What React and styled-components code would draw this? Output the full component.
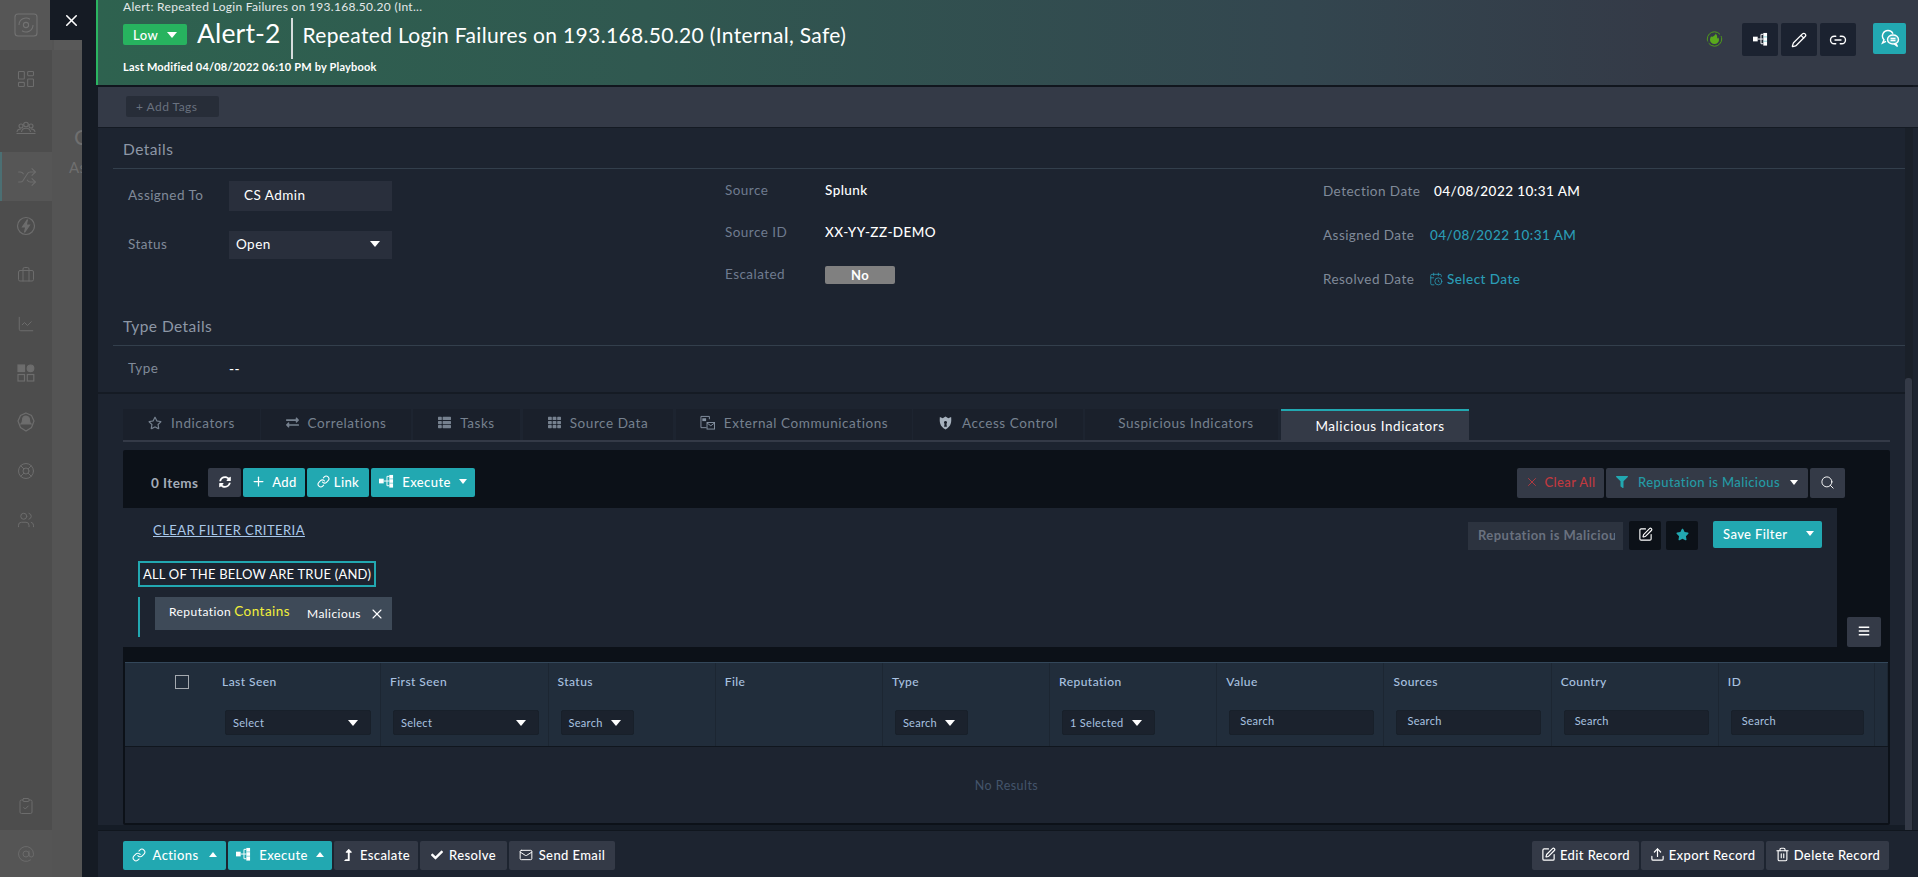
import React from 'react';
import styled, { createGlobalStyle } from 'styled-components';
import {
  LayoutDashboard, Users, Shuffle, Briefcase, ChartLine, LifeBuoy, ClipboardCheck, AtSign,
  X, Pencil, Link2, Link, Plus, Search, SquarePen, Mail, Upload, Trash2, CalendarClock,
} from 'lucide-react';
import {
  FaRegStar, FaExchangeAlt, FaThList, FaTh, FaSyncAlt, FaFilter, FaStar, FaBars, FaCheck, FaLevelUpAlt,
} from 'react-icons/fa';

const Global = createGlobalStyle`
  html, body { margin: 0; padding: 0; background: #1d2430; }
  * { box-sizing: border-box; }
  body { font-family: Lato, "Liberation Sans", sans-serif; letter-spacing: .45px; }
`;

const Page = styled.div`
  position: relative;
  display: flex;
  width: 1918px;
  height: 877px;
  overflow: hidden;
`;
const Sidebar = styled.nav`
  width: 52px;
  display: flex;
  flex-direction: column;
  background: #4d4d4d;
  color: #6d6d6d;
`;
const LogoCell = styled.div`
  height: 50px;
  margin-bottom: 4px;
  display: flex;
  align-items: center;
  justify-content: center;
  background: #565656;
`;
const NavItem = styled.div`
  height: 49px;
  flex: none;
  display: flex;
  align-items: center;
  justify-content: center;
  background: ${p => (p.$active ? '#565656' : 'transparent')};
  border-left: ${p => (p.$active ? '2px solid #4b6f73' : '0')};
`;
const NavBottom = styled(NavItem)`
  margin-top: auto;
`;
const AtCell = styled(NavItem)`
  height: 47px;
  background: #555555;
`;
const BackColumn = styled.div`
  width: 30px;
  background: #545454;
  color: #6f6f6f;
  overflow: hidden;
  white-space: nowrap;
`;
const BackTop = styled.div`
  height: 50px;
  background: #595959;
  margin-left: 2px;
`;
const BackHead = styled.div`
  margin: 75px 0 0 22px;
  font-size: 22px;
  line-height: 24px;
`;
const BackSub = styled.div`
  margin: 9px 0 0 17px;
  font-size: 15px;
  line-height: 18px;
`;
const Strip = styled.div`
  width: 14px;
  background: #151b24;
`;
const CloseButton = styled.button`
  position: absolute;
  left: 50px;
  top: 0;
  width: 46px;
  height: 40px;
  border: 0;
  padding: 0 4px 0 0;
  background: #151b24;
  color: #fff;
  display: flex;
  align-items: center;
  justify-content: center;
`;
const Drawer = styled.main`
  flex: 1;
  min-width: 0;
  display: flex;
  flex-direction: column;
  background: #151b24;
`;
const Header = styled.header`
  height: 85px;
  flex: none;
  display: flex;
  justify-content: space-between;
  border-left: 2px solid #2bb561;
  padding-left: 25px;
  background: linear-gradient(90deg, #2e624f 0%, #305850 30%, #33464f 66%, #343a47 86%);
  color: #fff;
`;
const Breadcrumb = styled.div`
  font-size: 12px;
  line-height: 14px;
  color: #e4e9ea;
  letter-spacing: .3px;
`;
const TitleRow = styled.div`
  display: flex;
  height: 41px;
  margin-top: 4px;
`;
const SeverityPill = styled.div`
  width: 64px;
  height: 21px;
  margin-top: 6px;
  padding-left: 10px;
  display: flex;
  align-items: center;
  gap: 9px;
  background: #27b35f;
  border-radius: 2px;
  font-size: 13px;
  font-weight: 500;
`;
const AlertId = styled.div`
  margin-left: 10px;
  font-size: 26.5px;
  line-height: 28px;
  padding-top: 1px;
  letter-spacing: .15px;
`;
const TitleDivider = styled.div`
  width: 2px;
  margin: 0 10px;
  background: #d6dcdc;
`;
const AlertTitle = styled.div`
  font-size: 21px;
  line-height: 30px;
  padding-top: 2px;
  letter-spacing: .33px;
`;
const Meta = styled.div`
  margin-top: 1px;
  font-size: 11px;
  line-height: 14px;
  font-weight: 700;
  letter-spacing: .2px;
`;
const HeaderActions = styled.div`
  display: flex;
  align-items: flex-start;
  padding: 23px 12px 0 0;
`;
const Flame = styled.div`
  width: 16px;
  height: 16px;
  margin: 7px 20px 0 0;
`;
const DarkIconButton = styled.button`
  width: 36px;
  height: 33px;
  margin-right: 3px;
  border: 0;
  padding: 0;
  border-radius: 2px;
  background: #1b2230;
  color: #fff;
  display: flex;
  align-items: center;
  justify-content: center;
`;
const TealIconButton = styled(DarkIconButton)`
  margin: 0 0 0 14px;
  background: #22a8b1;
  width: 33px;
  height: 31px;
`;
const HeaderRule = styled.div`
  height: 2px;
  flex: none;
  margin: 0 5px 0 2px;
  background: #11161e;
`;
const TagsBar = styled.div`
  height: 41px;
  flex: none;
  padding: 9px 0 0 28px;
  margin-left: 2px;
  background: #343a47;
  border-bottom: 1px solid #141a23;
`;
const AddTags = styled.div`
  width: 93px;
  height: 21px;
  padding-left: 10px;
  display: flex;
  align-items: center;
  background: #272d38;
  border-radius: 2px;
  color: #69717f;
  font-size: 12px;
`;
const Body = styled.div`
  flex: 1;
  min-height: 0;
  display: flex;
  margin-left: 2px;
  background: #1d2430;
`;
const Scroller = styled.div`
  width: 1807px;
  flex: none;
  display: flex;
  flex-direction: column;
`;
const SectionTitle = styled.h2`
  margin: 0 0 0 15px;
  height: ${p => (p.$compact ? '37px' : '41px')};
  padding: ${p => (p.$compact ? '7px' : '11px')} 0 0 10px;
  border-bottom: 1px solid #333f4c;
  font-size: 15.5px;
  font-weight: 400;
  line-height: 20px;
  color: #8d97a6;
`;
const DetailsGrid = styled.div`
  height: 140px;
  margin-left: 30px;
  display: grid;
  grid-template-columns: 597px 598px 1fr;
`;
const FieldColumn = styled.div`
  display: flex;
  flex-direction: column;
`;
const InputColumn = styled(FieldColumn)`
  padding-top: 12px;
  gap: 20px;
`;
const InputRow = styled.div`
  display: flex;
  align-items: center;
`;
const Label = styled.div`
  width: ${p => p.$w || 101}px;
  flex: none;
  font-size: 13.5px;
  padding-bottom: ${p => (p.$raised ? 2 : 0)}px;
  color: ${p => (p.$dim ? '#6f7b8f' : '#808a99')};
`;
const AssignBox = styled.div`
  width: 163px;
  height: 30px;
  padding: 0 0 2px 15px;
  display: flex;
  align-items: center;
  background: #292f3c;
  color: #fff;
  font-size: 13.5px;
`;
const StatusBox = styled(AssignBox)`
  height: 28px;
  padding: 0 12px 2px 7px;
  justify-content: space-between;
`;
const ValueRow = styled.div`
  height: ${p => p.$h}px;
  flex: none;
  display: flex;
  align-items: center;
`;
const Value = styled.div`
  font-size: 13.5px;
  font-weight: 500;
  color: ${p => (p.$link ? '#2a9cb5' : '#fff')};
  display: flex;
  align-items: center;
  gap: 4px;
  margin-left: ${p => p.$offset || 0}px;
`;
const NoChip = styled.div`
  width: 70px;
  height: 18px;
  margin-top: 2px;
  display: flex;
  align-items: center;
  justify-content: center;
  background: #808080;
  border-radius: 2px;
  color: #fff;
  font-size: 13px;
  font-weight: 700;
`;
const TypeRow = styled.div`
  height: 46px;
  margin-left: 30px;
  display: flex;
  align-items: center;
`;
const SectionBreak = styled.div`
  height: 2px;
  flex: none;
  background: #151b24;
`;
const Tabs = styled.div`
  margin: 15px 15px 0 25px;
  height: 33px;
  flex: none;
  display: flex;
  border-bottom: 2px solid #343a47;
`;
const Tab = styled.div`
  width: ${p => p.$w}px;
  margin-right: ${p => p.$gap || 0}px;
  padding: 0 0 ${p => (p.$active ? 0 : 4)}px ${p => p.$inset || 0}px;
  flex: none;
  display: flex;
  align-items: center;
  justify-content: center;
  gap: 9px;
  font-size: 13.5px;
  letter-spacing: .56px;
  color: ${p => (p.$active ? '#fff' : '#76818f')};
  background: ${p => (p.$active ? '#343a47' : '#1a202b')};
  border-top: ${p => (p.$active ? '2px solid #22a8b1' : '0')};
`;
const Panel = styled.section`
  margin: 8px 15px 0 25px;
  height: 375px;
  flex: none;
  background: #0c1118;
  border-radius: 2px;
  display: flex;
  flex-direction: column;
`;
const Toolbar = styled.div`
  height: 58px;
  flex: none;
  padding: 18px 45px 0 28px;
  display: flex;
  justify-content: space-between;
`;
const ToolGroup = styled.div`
  display: flex;
  gap: 2px;
`;
const ItemCount = styled.div`
  width: 55px;
  height: 29px;
  display: flex;
  align-items: center;
  font-size: 13.5px;
  font-weight: 700;
  color: #a4acb8;
`;
const Button = styled.button`
  width: ${p => p.$w}px;
  height: ${p => p.$h || 29}px;
  border: 0;
  padding: 0 0 2px;
  border-radius: 2px;
  flex: none;
  display: flex;
  align-items: center;
  justify-content: center;
  gap: ${p => p.$gap ?? 6}px;
  font-family: inherit;
  font-size: 13px;
  font-weight: 500;
  letter-spacing: .4px;
  color: ${p => p.$color || '#fff'};
  background: ${p => (p.$teal ? '#22a8b1' : '#343a47')};
`;
const FilterRow = styled.div`
  height: 139px;
  flex: none;
  display: flex;
`;
const FilterBox = styled.div`
  width: 1714px;
  flex: none;
  display: flex;
  justify-content: space-between;
  background: #1d2430;
`;
const FilterLeft = styled.div`
  padding: 14px 0 0 15px;
`;
const ClearLink = styled.a`
  display: block;
  margin-left: 15px;
  font-size: 13px;
  line-height: 16px;
  color: #a9c8ea;
  text-decoration: underline;
`;
const CriteriaTitle = styled.div`
  width: 238px;
  height: 26px;
  margin-top: 23px;
  display: flex;
  align-items: center;
  justify-content: center;
  border: 2px solid #22a8b1;
  color: #fff;
  font-size: 13px;
  letter-spacing: .22px;
  white-space: nowrap;
`;
const CriteriaGroup = styled.div`
  height: 40px;
  margin-top: 10px;
  padding-left: 15px;
  border-left: 2px solid #22a8b1;
`;
const Chip = styled.div`
  width: 237px;
  height: 33px;
  padding: 0 7px 4px 14px;
  display: flex;
  align-items: center;
  background: #3e4a58;
  color: #fff;
  font-size: 12px;
`;
const ChipOperator = styled.span`
  margin: 0 auto 0 3px;
  color: #f2ef3a;
  font-size: 13.5px;
  position: relative;
  top: -1px;
`;
const ChipValue = styled.span`
  margin-right: 8px;
  position: relative;
  top: 2px;
`;
const ChipClose = styled.span`
  display: flex;
  position: relative;
  top: 2px;
`;
const FilterRight = styled.div`
  display: flex;
  align-items: flex-start;
  padding: 13px 15px 0 0;
`;
const FilterName = styled.div`
  width: 155px;
  height: 28px;
  margin: 1px 6px 0 0;
  padding: 0 8px 2px 10px;
  display: flex;
  align-items: center;
  background: #2c333f;
  color: #69717f;
  font-size: 13px;
  font-weight: 700;
`;
const FilterNameText = styled.span`
  overflow: hidden;
  white-space: nowrap;
`;
const BlackIconButton = styled.button`
  width: 32px;
  height: 29px;
  margin-right: ${p => p.$gap}px;
  border: 0;
  padding: 0 0 2px;
  border-radius: 2px;
  background: #0c1118;
  color: ${p => p.$color || '#fff'};
  display: flex;
  align-items: center;
  justify-content: center;
`;
const SaveFilter = styled(Button)`
  justify-content: space-between;
  padding: 0 8px 2px 10px;
  height: 27px;
`;
const BurgerCell = styled.div`
  flex: 1;
  display: flex;
  align-items: flex-end;
  padding-left: 10px;
`;
const Table = styled.div`
  margin: 15px 2px 0;
  flex: 1;
  min-height: 0;
  display: flex;
  flex-direction: column;
`;
const TableHead = styled.div`
  height: 85px;
  flex: none;
  display: grid;
  grid-template-columns: 88px 168px 167.5px repeat(7, 167.2px) 156px 1fr;
  background: #212d3b;
  border-top: 1px solid #33475a;
  border-bottom: 1px solid #10161e;
`;
const CheckCell = styled.div`
  padding: 12px 0 0 50px;
`;
const Checkbox = styled.div`
  width: 14px;
  height: 14px;
  border: 1px solid #a4a9af;
`;
const HeadCell = styled.div`
  padding: 11px 0 0 9px;
  border-right: 1px solid #1c2632;
`;
const HeadLabel = styled.div`
  font-size: 12px;
  font-weight: 500;
  line-height: 16px;
  color: #a9c2e0;
`;
const Control = styled.div`
  width: ${p => p.$w}px;
  height: 25px;
  margin: 20px 0 0 3px;
  padding: 0 ${p => (p.$input ? 0 : 12)}px ${p => (p.$input ? 5 : 0)}px ${p => (p.$input ? 10 : 7)}px;
  display: flex;
  align-items: center;
  justify-content: space-between;
  background: #1b222d;
  border: 1px solid #18202a;
  border-radius: 2px;
  font-size: 11px;
  letter-spacing: .3px;
  color: #a9c2e0;
  white-space: nowrap;
`;
const Empty = styled.div`
  flex: 1;
  display: flex;
  align-items: center;
  justify-content: center;
  background: #1d2430;
  font-size: 12.5px;
  color: #44546b;
`;
const PanelFoot = styled.div`
  height: 2px;
  flex: none;
`;
const BottomStrip = styled.div`
  height: 5px;
  flex: none;
  background: #151c26;
`;
const Track = styled.div`
  width: 8px;
  flex: none;
  background: #1a2029;
  padding-top: 250px;
`;
const Thumb = styled.div`
  height: 452px;
  width: 7px;
  border-radius: 3px 3px 0 0;
  background: #343a47;
`;
const Footer = styled.footer`
  height: 47px;
  flex: none;
  margin-left: 2px;
  padding: 10px 29px 0 25px;
  display: flex;
  justify-content: space-between;
  background: #1d2430;
  border-top: 1px solid #10161e;
`;
const Caret = styled.span`
  width: 0;
  height: 0;
  flex: none;
  margin-left: ${p => p.$ml || 0}px;
  border-left: ${p => (p.$big ? 5 : 4)}px solid transparent;
  border-right: ${p => (p.$big ? 5 : 4)}px solid transparent;
  ${p => (p.$up ? 'border-bottom: 5px solid #fff;' : `border-top: ${p.$big ? 6 : 5}px solid #fff;`)}
`;

const Execute = ({ size = 15 }) => (
  <svg width={size} height={size} viewBox="0 0 16 16" fill="none">
    <rect x="0" y="5" width="5" height="5" fill="currentColor" />
    <path d="M5 7.5h3.5M8.5 2.5v10M8.5 2.5H11M8.5 7.5H11M8.5 12.5H11" stroke="currentColor" />
    <path d="M11 1h4v13.500h-4z" fill="currentColor" />
    <path d="M11 5.200h4M11 9.800h4" stroke="#22a8b1" strokeOpacity=".55" />
  </svg>
);
const Chat = () => (
  <svg width="20" height="20" viewBox="0 0 20 20" fill="none" stroke="#fff" strokeWidth="1.4">
    <path d="M8 1.500a5.500 5.500 0 0 0-4 9.300L2.500 14l3.500-1.600" />
    <path d="M8 1.500a5.500 5.500 0 0 1 5 3.300" />
    <ellipse cx="13" cy="10.500" rx="5.500" ry="4.500" fill="#fff" fillOpacity=".18" />
    <path d="M10.500 9.500h5M10.500 11.500h5M16 14.500l1.500 3-3.500-2.700" />
  </svg>
);
const FlameIcon = () => (
  <svg width="17" height="18" viewBox="0 0 16 18" fill="none">
    <circle cx="8" cy="9" r="7.200" stroke="#4f9a1a" strokeWidth="1" strokeDasharray="18 2 20 2" />
    <path d="M9 3.500c.4 1.900-3 3.200-3.400 3.500-.7-.2-1-.7-1-.7C3.800 7.800 3.500 9 3.500 10c0 2.200 2 4 4.500 4s4.500-1.800 4.500-4c0-1.100-.3-2-.9-2.600-.1.600-.5 1-.9 1.100C10.900 6.500 10.500 4.500 9 3.500z" fill="#5aaa1c" />
  </svg>
);
const Logo = () => (
  <svg width="24" height="24" viewBox="0 0 24 24" fill="none" stroke="#727272" strokeWidth="1.100">
    <rect x="1" y="1" width="22" height="22" rx="3" />
    <path d="M5 12a7 7 0 0 1 11-5.700M19 12a7 7 0 0 1-11 5.700" />
    <circle cx="12" cy="12" r="2.600" />
  </svg>
);
const GroupIcon = () => (
  <svg width="20" height="14" viewBox="0 0 20 14" fill="none" stroke="currentColor" strokeWidth="1.100">
    <circle cx="5" cy="5" r="2" />
    <circle cx="10" cy="3.500" r="2.300" />
    <circle cx="15" cy="5" r="2" />
    <path d="M1 11c.2-2 1.800-3 4-3M19 11c-.2-2-1.800-3-4-3M5.500 11c.3-2.500 2-3.800 4.500-3.800s4.200 1.300 4.500 3.800M.5 12.500h19" />
  </svg>
);
const BoltCircle = () => (
  <svg width="20" height="20" viewBox="0 0 20 20" fill="none" stroke="currentColor" strokeWidth="1.200">
    <circle cx="10" cy="10" r="8.500" />
    <path d="M11.500 3.500 6.500 11h3.300l-1.300 5.500 5-7.500h-3.300z" fill="currentColor" />
  </svg>
);
const AppsIcon = () => (
  <svg width="18" height="18" viewBox="0 0 18 18" fill="none" stroke="currentColor" strokeWidth="1.200">
    <rect x="1" y="1" width="6.500" height="6.500" fill="currentColor" />
    <circle cx="13.500" cy="4.300" r="3.300" fill="currentColor" />
    <rect x="1" y="10.500" width="6.500" height="6.500" />
    <rect x="10.300" y="10.500" width="6.500" height="6.500" />
  </svg>
);
const BellCircle = () => (
  <svg width="18" height="20" viewBox="0 0 18 20" fill="none" stroke="currentColor" strokeWidth="1.200">
    <path d="M9 1 L14.500 3.500 L17 9 L14.500 15.500 L9 19 L3.500 15.500 L1 9 L3.500 3.500 Z" />
    <path d="M9 4c-2.500 0-3.500 2-3.500 4.500 0 2-1 3-1.500 3.500h10c-.5-.5-1.500-1.500-1.500-3.500C12.500 6 11.500 4 9 4z" fill="currentColor" />
  </svg>
);
const ExternalComm = () => (
  <svg width="15" height="15" viewBox="0 0 16 16" fill="none" stroke="#8793a3" strokeWidth="1">
    <path d="M1 1.500h9v3M1 1.500v12h6" />
    <rect x="2.500" y="3.500" width="4" height="3" fill="#8793a3" stroke="none" />
    <rect x="7.500" y="8" width="8" height="7" fill="#1a202b" />
    <path d="M7.500 8.500l4 3 4-3" />
  </svg>
);
const Shield = () => (
  <svg width="15" height="15" viewBox="0 0 16 16">
    <path d="M2 2.200 5 3.500 8 1.500l3 2 3-1.300c.5 5 .3 10-6 13.300C1.700 12.200 1.500 7.200 2 2.200z" fill="#a6b1bd" />
    <path d="M8 6.500a1.600 1.600 0 0 1 1 2.900l.5 3.100h-3l.5-3.100a1.600 1.600 0 0 1 1-2.900z" fill="#1a202b" />
  </svg>
);

const nav = [
  [LayoutDashboard, 20], [GroupIcon], [Shuffle, 20], [BoltCircle], [Briefcase, 18], [ChartLine, 18],
  [AppsIcon], [BellCircle], [LifeBuoy, 18], [Users, 18],
];

const tabs = [
  { label: 'Indicators', w: 137, gap: 1, icon: <FaRegStar size={14} /> },
  { label: 'Correlations', w: 150, gap: 2, icon: <FaExchangeAlt size={13} /> },
  { label: 'Tasks', w: 107, gap: 3, icon: <FaThList size={13} /> },
  { label: 'Source Data', w: 150, gap: 3, icon: <FaTh size={13} /> },
  { label: 'External Communications', w: 236, gap: 1, icon: <ExternalComm /> },
  { label: 'Access Control', w: 170, gap: 2, icon: <Shield /> },
  { label: 'Suspicious Indicators', w: 193, gap: 3, inset: 9 },
  { label: 'Malicious Indicators', w: 188, active: true, inset: 10 },
];

const columns = [
  { label: 'Last Seen', text: 'Select', w: 146 },
  { label: 'First Seen', text: 'Select', w: 146 },
  { label: 'Status', text: 'Search', w: 73 },
  { label: 'File' },
  { label: 'Type', text: 'Search', w: 73 },
  { label: 'Reputation', text: '1 Selected', w: 93 },
  { label: 'Value', text: 'Search', w: 145, input: true },
  { label: 'Sources', text: 'Search', w: 145, input: true },
  { label: 'Country', text: 'Search', w: 145, input: true },
  { label: 'ID', text: 'Search', w: 133, input: true },
];

export default function App() {
  return (
    <Page>
      <Global />
      <Sidebar>
        <LogoCell><Logo /></LogoCell>
        {nav.map(([Icon, size], i) => (
          <NavItem key={i} $active={i === 2}>
            {size ? <Icon size={size} strokeWidth={1.3} /> : <Icon />}
          </NavItem>
        ))}
        <NavBottom><ClipboardCheck size={18} strokeWidth={1.3} /></NavBottom>
        <AtCell><AtSign size={18} strokeWidth={1.2} /></AtCell>
      </Sidebar>
      <BackColumn>
        <BackTop />
        <BackHead>C</BackHead>
        <BackSub>As</BackSub>
      </BackColumn>
      <Strip />
      <CloseButton aria-label="Close"><X size={19} strokeWidth={2} /></CloseButton>
      <Drawer>
        <Header>
          <div>
            <Breadcrumb>Alert: Repeated Login Failures on 193.168.50.20 (Int...</Breadcrumb>
            <TitleRow>
              <SeverityPill>Low <Caret $big /></SeverityPill>
              <AlertId>Alert-2</AlertId>
              <TitleDivider />
              <AlertTitle>Repeated Login Failures on 193.168.50.20 (Internal, Safe)</AlertTitle>
            </TitleRow>
            <Meta>Last Modified 04/08/2022 06:10 PM by Playbook</Meta>
          </div>
          <HeaderActions>
            <Flame><FlameIcon /></Flame>
            <DarkIconButton><Execute /></DarkIconButton>
            <DarkIconButton><Pencil size={16} strokeWidth={1.9} /></DarkIconButton>
            <DarkIconButton><Link2 size={18} strokeWidth={1.8} /></DarkIconButton>
            <TealIconButton><Chat /></TealIconButton>
          </HeaderActions>
        </Header>
        <HeaderRule />
        <TagsBar><AddTags>+ Add Tags</AddTags></TagsBar>
        <Body>
          <Scroller>
            <SectionTitle>Details</SectionTitle>
            <DetailsGrid>
              <InputColumn>
                <InputRow>
                  <Label $raised>Assigned To</Label>
                  <AssignBox>CS Admin</AssignBox>
                </InputRow>
                <InputRow>
                  <Label $raised>Status</Label>
                  <StatusBox>Open <Caret $big /></StatusBox>
                </InputRow>
              </InputColumn>
              <FieldColumn>
                <ValueRow $h={42}><Label $dim $w={100}>Source</Label><Value>Splunk</Value></ValueRow>
                <ValueRow $h={42}><Label $dim $w={100}>Source ID</Label><Value>XX-YY-ZZ-DEMO</Value></ValueRow>
                <ValueRow $h={42}><Label $dim $w={100}>Escalated</Label><NoChip>No</NoChip></ValueRow>
              </FieldColumn>
              <FieldColumn>
                <ValueRow $h={44}><Label $w={106}>Detection Date</Label><Value $offset={5}>04/08/2022 10:31 AM</Value></ValueRow>
                <ValueRow $h={44}><Label $w={107}>Assigned Date</Label><Value $link>04/08/2022 10:31 AM</Value></ValueRow>
                <ValueRow $h={44}><Label $w={106}>Resolved Date</Label><Value $link><CalendarClock size={14} strokeWidth={1.4} /> Select Date</Value></ValueRow>
              </FieldColumn>
            </DetailsGrid>
            <SectionTitle $compact>Type Details</SectionTitle>
            <TypeRow>
              <Label $raised>Type</Label>
              <Value>--</Value>
            </TypeRow>
            <SectionBreak />
            <Tabs>
              {tabs.map(t => (
                <Tab key={t.label} $w={t.w} $gap={t.gap} $active={t.active} $inset={t.inset}>
                  {t.icon}{t.label}
                </Tab>
              ))}
            </Tabs>
            <Panel>
              <Toolbar>
                <ToolGroup>
                  <ItemCount>0 Items</ItemCount>
                  <Button $w={33}><FaSyncAlt size={12} /></Button>
                  <Button $w={62} $teal><Plus size={15} />Add</Button>
                  <Button $w={62} $teal $gap={4}><Link size={13} />Link</Button>
                  <Button $w={104} $teal $gap={8}><Execute />Execute<Caret /></Button>
                </ToolGroup>
                <ToolGroup>
                  <Button $w={87} $h={30} $color="#c0393f" $gap={5}><X size={14} strokeWidth={1.5} />Clear All</Button>
                  <Button $w={202} $h={30} $color="#249aa5" $gap={10}><FaFilter size={12} color="#22a8b1" />Reputation is Malicious<Caret /></Button>
                  <Button $w={35} $h={30}><Search size={15} strokeWidth={1.5} /></Button>
                </ToolGroup>
              </Toolbar>
              <FilterRow>
                <FilterBox>
                  <FilterLeft>
                    <ClearLink>CLEAR FILTER CRITERIA</ClearLink>
                    <CriteriaTitle>ALL OF THE BELOW ARE TRUE (AND)</CriteriaTitle>
                    <CriteriaGroup>
                      <Chip>
                        Reputation<ChipOperator>Contains</ChipOperator>
                        <ChipValue>Malicious</ChipValue>
                        <ChipClose><X size={16} strokeWidth={1.6} /></ChipClose>
                      </Chip>
                    </CriteriaGroup>
                  </FilterLeft>
                  <FilterRight>
                    <FilterName><FilterNameText>Reputation is Malicious</FilterNameText></FilterName>
                    <BlackIconButton $gap={5}><SquarePen size={15} strokeWidth={1.8} /></BlackIconButton>
                    <BlackIconButton $gap={15} $color="#22a8b1"><FaStar size={13} /></BlackIconButton>
                    <SaveFilter $w={109} $teal>Save Filter<Caret /></SaveFilter>
                  </FilterRight>
                </FilterBox>
                <BurgerCell><Button $w={34} $h={30}><FaBars size={12} /></Button></BurgerCell>
              </FilterRow>
              <Table>
                <TableHead>
                  <CheckCell><Checkbox /></CheckCell>
                  {columns.map(c => (
                    <HeadCell key={c.label}>
                      <HeadLabel>{c.label}</HeadLabel>
                      {c.text && (
                        <Control $w={c.w} $input={c.input}>
                          {c.text}{!c.input && <Caret $big />}
                        </Control>
                      )}
                    </HeadCell>
                  ))}
                  <HeadCell />
                </TableHead>
                <Empty>No Results</Empty>
              </Table>
              <PanelFoot />
            </Panel>
            <BottomStrip />
          </Scroller>
          <Track><Thumb /></Track>
        </Body>
        <Footer>
          <ToolGroup>
            <Button $w={103} $teal $gap={7}><Link size={14} strokeWidth={1.8} />Actions<Caret $up $ml={4} /></Button>
            <Button $w={104} $teal $gap={8}><Execute />Execute<Caret $up /></Button>
            <Button $w={84}><FaLevelUpAlt size={12} />Escalate</Button>
            <Button $w={87}><FaCheck size={12} />Resolve</Button>
            <Button $w={106}><Mail size={14} strokeWidth={1.7} />Send Email</Button>
          </ToolGroup>
          <ToolGroup>
            <Button $w={107} $gap={4}><SquarePen size={15} strokeWidth={1.9} />Edit Record</Button>
            <Button $w={123} $gap={4}><Upload size={15} strokeWidth={1.9} />Export Record</Button>
            <Button $w={123} $gap={4}><Trash2 size={15} strokeWidth={1.8} />Delete Record</Button>
          </ToolGroup>
        </Footer>
      </Drawer>
    </Page>
  );
}
